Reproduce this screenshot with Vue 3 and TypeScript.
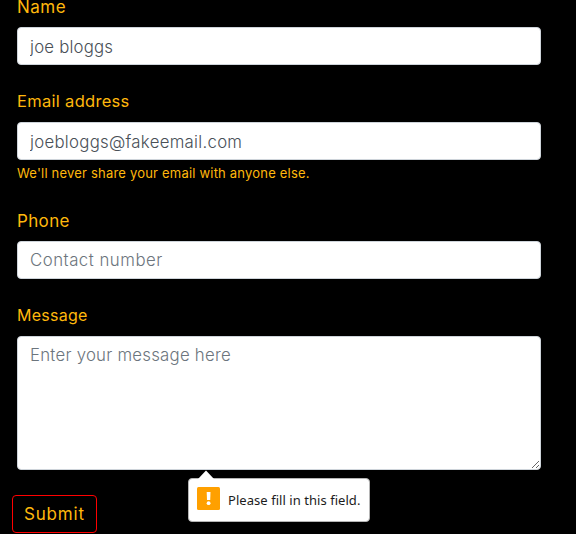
<script setup lang="ts">
import { reactive } from 'vue'

const form = reactive({
  name: 'joe bloggs',
  email: 'joebloggs@fakeemail.com',
  phone: '',
  message: '',
})
</script>

<template>
  <main class="page">
    <form class="contact" novalidate @submit.prevent>
      <div class="group">
        <label class="l-name" for="name">Name</label>
        <input id="name" v-model="form.name" class="control v-name" type="text" />
      </div>
      <div class="group">
        <label class="l-email" for="email">Email address</label>
        <input id="email" v-model="form.email" class="control v-email" type="text" spellcheck="false" />
        <small class="hint">We'll never share your email with anyone else.</small>
      </div>
      <div class="group">
        <label class="l-phone" for="phone">Phone</label>
        <input id="phone" v-model="form.phone" class="control v-phone" type="text" placeholder="Contact number" />
      </div>
      <div class="group message-group">
        <label class="l-message" for="message">Message</label>
        <textarea id="message" v-model="form.message" class="control area" placeholder="Enter your message here"></textarea>
        <div class="bubble" role="alert">
          <svg class="pointer" width="16" height="9" viewBox="0 0 16 9">
            <path d="M0 9 L8 0.5 L16 9 Z" fill="#fff" />
          </svg>
          <svg class="warn" width="23" height="23" viewBox="0 0 23 23">
            <rect width="23" height="23" rx="1.5" fill="#ffa000" />
            <path d="M9.7 5h3.8l-.3 8h-3.2z" fill="#fff" />
            <circle cx="11.6" cy="16.2" r="1.9" fill="#fff" />
          </svg>
          <span class="bubble-text">Please fill in this field.</span>
        </div>
      </div>
      <button class="submit" type="submit">Submit</button>
    </form>
  </main>
</template>

<style>
body {
  background: #000;
  overflow: hidden;
}
</style>

<style scoped>
.page {
  box-sizing: border-box;
  height: 534px;
  overflow: hidden;
  background: #000;
  font-family: Inter, "Open Sans", sans-serif;
  color: #ffb80c;
}
.contact {
  width: 524px;
  margin: -5px 0 0 17px;
}
.group {
  display: flex;
  flex-direction: column;
  align-items: flex-start;
  margin-bottom: 25px;
}
label {
  margin-bottom: 10px;
  font-size: 16px;
  line-height: 22px;
}
.l-name,
.l-phone {
  margin-bottom: 8px;
  font-size: 17px;
  line-height: 24px;
}
.l-name {
  letter-spacing: 0.5px;
}
.l-email {
  font-size: 16.5px;
  letter-spacing: 0.3px;
}
.l-phone {
  letter-spacing: 0.35px;
}
.l-message {
  letter-spacing: 0.25px;
}
.control {
  box-sizing: border-box;
  width: 100%;
  height: 38px;
  margin: 0;
  padding: 7px 12px 5px;
  border: 1px solid #ced4da;
  border-radius: 4px;
  background: #fff;
  color: #495057;
  font-family: inherit;
  font-size: 16.8px;
  font-weight: 300;
  line-height: 24px;
  outline: none;
}
.control::placeholder {
  color: #6c757d;
  opacity: 1;
}
.v-name {
  letter-spacing: 0.2px;
}
.v-email {
  letter-spacing: 0.28px;
}
.v-phone {
  padding: 6px 12px;
  letter-spacing: 0.5px;
}
.area {
  display: block;
  height: 134px;
  padding-top: 6px;
  letter-spacing: 0.24px;
  resize: vertical;
}
.hint {
  margin: 3px 0 1px;
  font-size: 13px;
  line-height: 20px;
  letter-spacing: 0.2px;
}
.message-group {
  position: relative;
}
.bubble {
  position: absolute;
  left: 171px;
  top: 174px;
  box-sizing: border-box;
  width: 182px;
  height: 44px;
  display: flex;
  align-items: center;
  padding: 0 0 3px 9px;
  border: 1px solid #b5b5b5;
  border-radius: 4px;
  background: #fff;
  color: #1c1c1c;
  font-family: "Noto Sans", sans-serif;
  font-size: 13px;
}
.pointer {
  position: absolute;
  left: 9px;
  top: -9px;
}
.warn {
  flex: none;
  margin: 0 8px 0 -1px;
}
.bubble-text {
  padding-top: 3px;
  letter-spacing: 0.05px;
  white-space: nowrap;
}
.submit {
  display: block;
  box-sizing: border-box;
  width: 85px;
  height: 38px;
  margin-left: -5px;
  padding: 0 0 0 11px;
  border: 1px solid #f00;
  border-radius: 4px;
  background: transparent;
  color: inherit;
  font-family: inherit;
  font-size: 17px;
  line-height: 24px;
  letter-spacing: 0.8px;
  text-align: left;
}
</style>
